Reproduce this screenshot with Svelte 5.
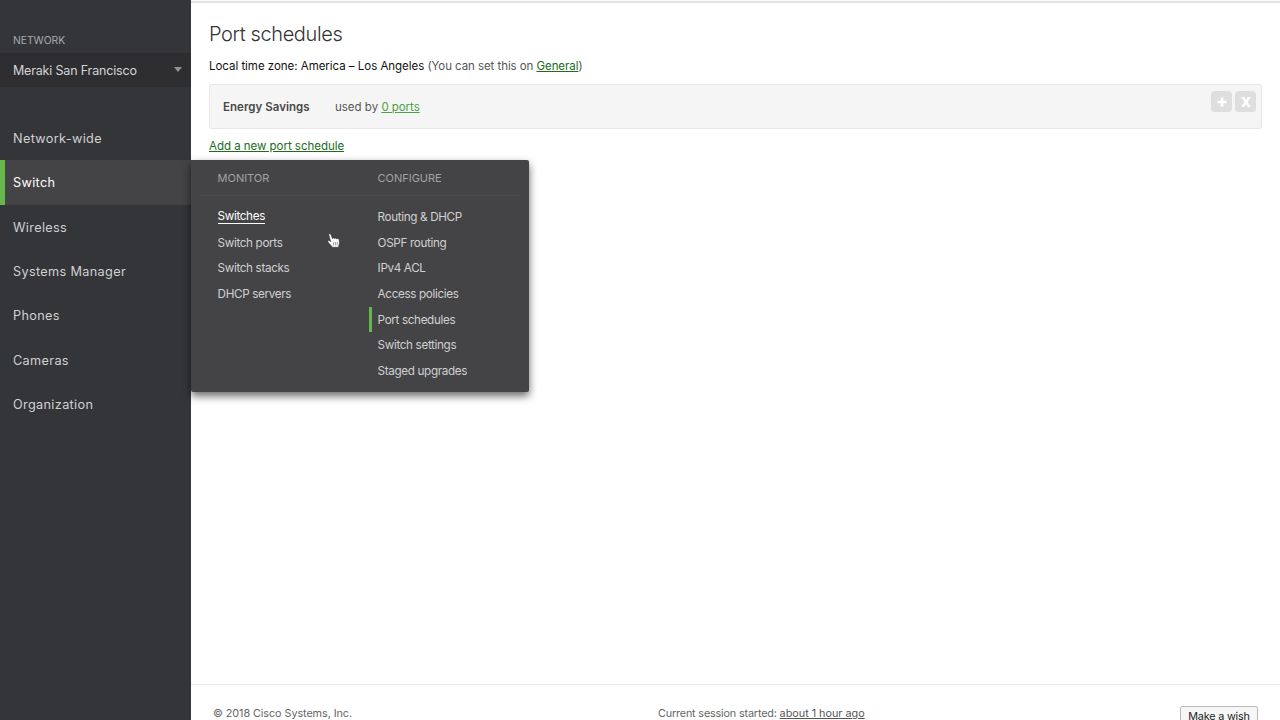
<script>
  const navItems = ['Network-wide', 'Switch', 'Wireless', 'Systems Manager', 'Phones', 'Cameras', 'Organization'];
  const monitor = ['Switches', 'Switch ports', 'Switch stacks', 'DHCP servers'];
  const configure = ['Routing & DHCP', 'OSPF routing', 'IPv4 ACL', 'Access policies', 'Port schedules', 'Switch settings', 'Staged upgrades'];

  let openItem = $state('Switch');
  let hovered = $state('Switches');
  let currentPage = $state('Port schedules');
</script>

<div class="app">
  <aside class="sidebar">
    <div class="label">NETWORK</div>
    <button class="network">
      <span class="network-name">Meraki San Francisco</span>
      <span class="caret"></span>
    </button>

    <nav class="nav">
      {#each navItems as item}
        <div class="nav-row">
          <button class={`nav-item ${openItem === item ? 'active' : ''}`} onclick={() => (openItem = item)}>{item}</button>
          {#if item === 'Switch' && openItem === item}
            <div class="flyout">
              <div class="heads">
                <span>MONITOR</span>
                <span>CONFIGURE</span>
              </div>
              <div class="cols">
                <div class="col">
                  {#each monitor as link}
                    <button class="sub" class:hovered={hovered === link} onmouseenter={() => (hovered = link)}><span>{link}</span></button>
                  {/each}
                </div>
                <div class="col">
                  {#each configure as link}
                    <button class="sub" class:current={currentPage === link} onclick={() => (currentPage = link)}><span>{link}</span></button>
                  {/each}
                </div>
              </div>
              <svg class="pointer" width="14" height="16" viewBox="0 0 14 16">
                <path d="M1.8 2C1.6.5 3.4.3 4 1.8L5.4 5.6C6 4.6 7.2 4.7 7.6 5.6C8.2 4.9 9.4 5 9.8 6C10.6 5.4 12 5.6 12.2 6.8L12.4 9.5C12.5 11.2 11.8 12.2 11.5 14.2H5.2C4.6 12.4 2.3 11.1 1 8.9C.4 7.4 2 6.8 3.8 8.7Z" fill="#fff" stroke="#222" stroke-width=".5" />
                <path d="M6.3 9.2L6.7 12.4M8.3 9L8.5 12.3M10.2 9L10.3 12.2" stroke="#555" stroke-width=".6" />
              </svg>
            </div>
          {/if}
        </div>
      {/each}
    </nav>
  </aside>

  <main class="main">
    <div class="content">
      <h1>Port schedules</h1>
      <p class="tz"><span class="zone">Local time zone: America – Los Angeles</span> <span class="hint">(You can set this on <a href="#general">General</a>)</span></p>
      <section class="schedule">
        <strong>Energy Savings</strong>
        <span class="used">used by <a href="#ports">0 ports</a></span>
        <div class="actions">
          <button class="action" aria-label="Add">
            <svg width="10" height="10" viewBox="0 0 10 10"><path d="M5 0.5V9.5M0.5 5H9.5" stroke="#fff" stroke-width="2.7" /></svg>
          </button>
          <button class="action" aria-label="Remove">
            <svg width="10" height="10" viewBox="0 0 10 10"><path d="M1.7 0.2L8.3 9.8M8.3 0.2L1.7 9.8" stroke="#fff" stroke-width="2.5" /><path d="M0.5 0.7H3.4M6.6 0.7H9.5M0.5 9.3H3.4M6.6 9.3H9.5" stroke="#fff" stroke-width="1" /></svg>
          </button>
        </div>
      </section>
      <a class="add" href="#add">Add a new port schedule</a>
    </div>

    <footer class="footer">
      <span class="copy">© 2018 Cisco Systems, Inc.</span>
      <span class="session">Current session started: <a href="#session">about 1 hour ago</a></span>
      <button class="wish">Make a wish</button>
    </footer>
  </main>
</div>

<style>
  :global(body) { margin:0; overflow:hidden; }
  .app { display:flex; width:1280px; height:720px; overflow:hidden; background:#fff; font-family:Inter, "Liberation Sans", sans-serif; font-size:11.5px; color:#555; }
  button { font-family:inherit; border:0; padding:0; margin:0; background:none; text-align:left; cursor:pointer; }
  a { text-underline-offset:1px; }

  .sidebar { width:191px; flex:none; box-sizing:border-box; padding-top:28px; background:#343538; position:relative; z-index:2; }
  .label { height:25px; line-height:25px; padding-left:13px; font-size:10.3px; color:#a9a9aa; }
  .network { width:100%; height:34px; padding:0 9px 0 13px; display:flex; align-items:center; justify-content:space-between; background:#2e2e30; color:#d4d4d5; }
  .network-name { font-size:12.5px; letter-spacing:-.17px; }
  .caret { border:4.5px solid transparent; border-top:5px solid #929293; border-bottom:0; margin-bottom:2px; }
  .nav { margin-top:29px; display:flex; flex-direction:column; }
  .nav-row { height:44.45px; position:relative; display:flex; }
  .nav-item { width:100%; padding-left:13px; font-size:12.7px; font-weight:400; letter-spacing:.34px; color:#d0d0d1; }
  .nav-item.active { background:#444446; color:#fff; border-left:5px solid #67b84a; padding-left:8px; }

  .flyout { position:absolute; left:191px; top:-.45px; width:337.6px; height:232px; background:#444446; border-radius:0 2px 2px 2px; box-shadow:0 4px 9px rgba(0,0,0,.6); }
  .heads { height:35px; line-height:37px; margin:0 9px; padding-left:17.6px; display:grid; grid-template-columns:160px 1fr; border-bottom:1px solid #4b4b4d; font-size:11px; letter-spacing:-.02px; color:#a2a2a4; }
  .cols { display:grid; grid-template-columns:160px 1fr; padding:8px 0 0 17.6px; }
  .col { display:flex; flex-direction:column; }
  .sub { height:25.7px; padding-left:6px; border-left:3px solid transparent; color:#d0d0d1; font-size:11.7px; letter-spacing:-.35px; display:flex; align-items:center; }
  .hovered { color:#fff; }
  .hovered span { border-bottom:1px solid #fff; line-height:13px; margin-top:1px; }
  .current { border-left-color:#67b84a; }
  .pointer { position:absolute; left:136px; top:73px; }

  .main { flex:1; min-width:0; display:flex; flex-direction:column; border-top:1px solid #fafafa; }
  .content { flex:1; padding:0 18px; border-top:2px solid #e2e2e2; }
  h1 { margin:0; padding-top:16px; font-size:20px; line-height:30px; font-weight:300; letter-spacing:-.38px; color:#333; }
  .tz { margin:8px 0 0; line-height:18px; white-space:nowrap; letter-spacing:-.07px; }
  .zone { color:#111; letter-spacing:-.03px; }
  .tz a, .add { color:#216b1c; }
  .schedule { margin-top:9px; height:45px; box-sizing:border-box; border:1px solid #e8e8e8; border-radius:2px; background:#f5f5f5; display:flex; align-items:center; padding:0 5px 0 13px; }
  .schedule strong { width:112px; font-weight:600; letter-spacing:.03px; color:#484848; }
  .used a { color:#4ba13f; letter-spacing:-.05px; }
  .actions { margin-left:auto; align-self:flex-start; padding-top:6px; display:flex; gap:3px; }
  .action { width:21px; height:21px; border-radius:4px; background:#dedede; display:flex; align-items:center; justify-content:center; }
  .add { display:inline-block; margin-top:8px; line-height:18px; letter-spacing:-.03px; }

  .footer { height:36px; flex:none; box-sizing:border-box; border-top:1px solid #ececec; padding:0 22px; display:grid; grid-template-columns:445px 1fr auto; font-size:10.8px; color:#666; }
  .copy, .session { padding-top:20px; line-height:18px; white-space:nowrap; }
  .copy { letter-spacing:-.06px; }
  .session { letter-spacing:-.16px; }
  .session a { color:#555; letter-spacing:0; }
  .wish { margin-top:21px; height:22px; width:78px; box-sizing:border-box; text-align:center; border:1px solid #b9b9b9; border-radius:2px; background:#f6f6f6; color:#222; font-size:10.8px; letter-spacing:-.17px; line-height:18px; }
</style>
